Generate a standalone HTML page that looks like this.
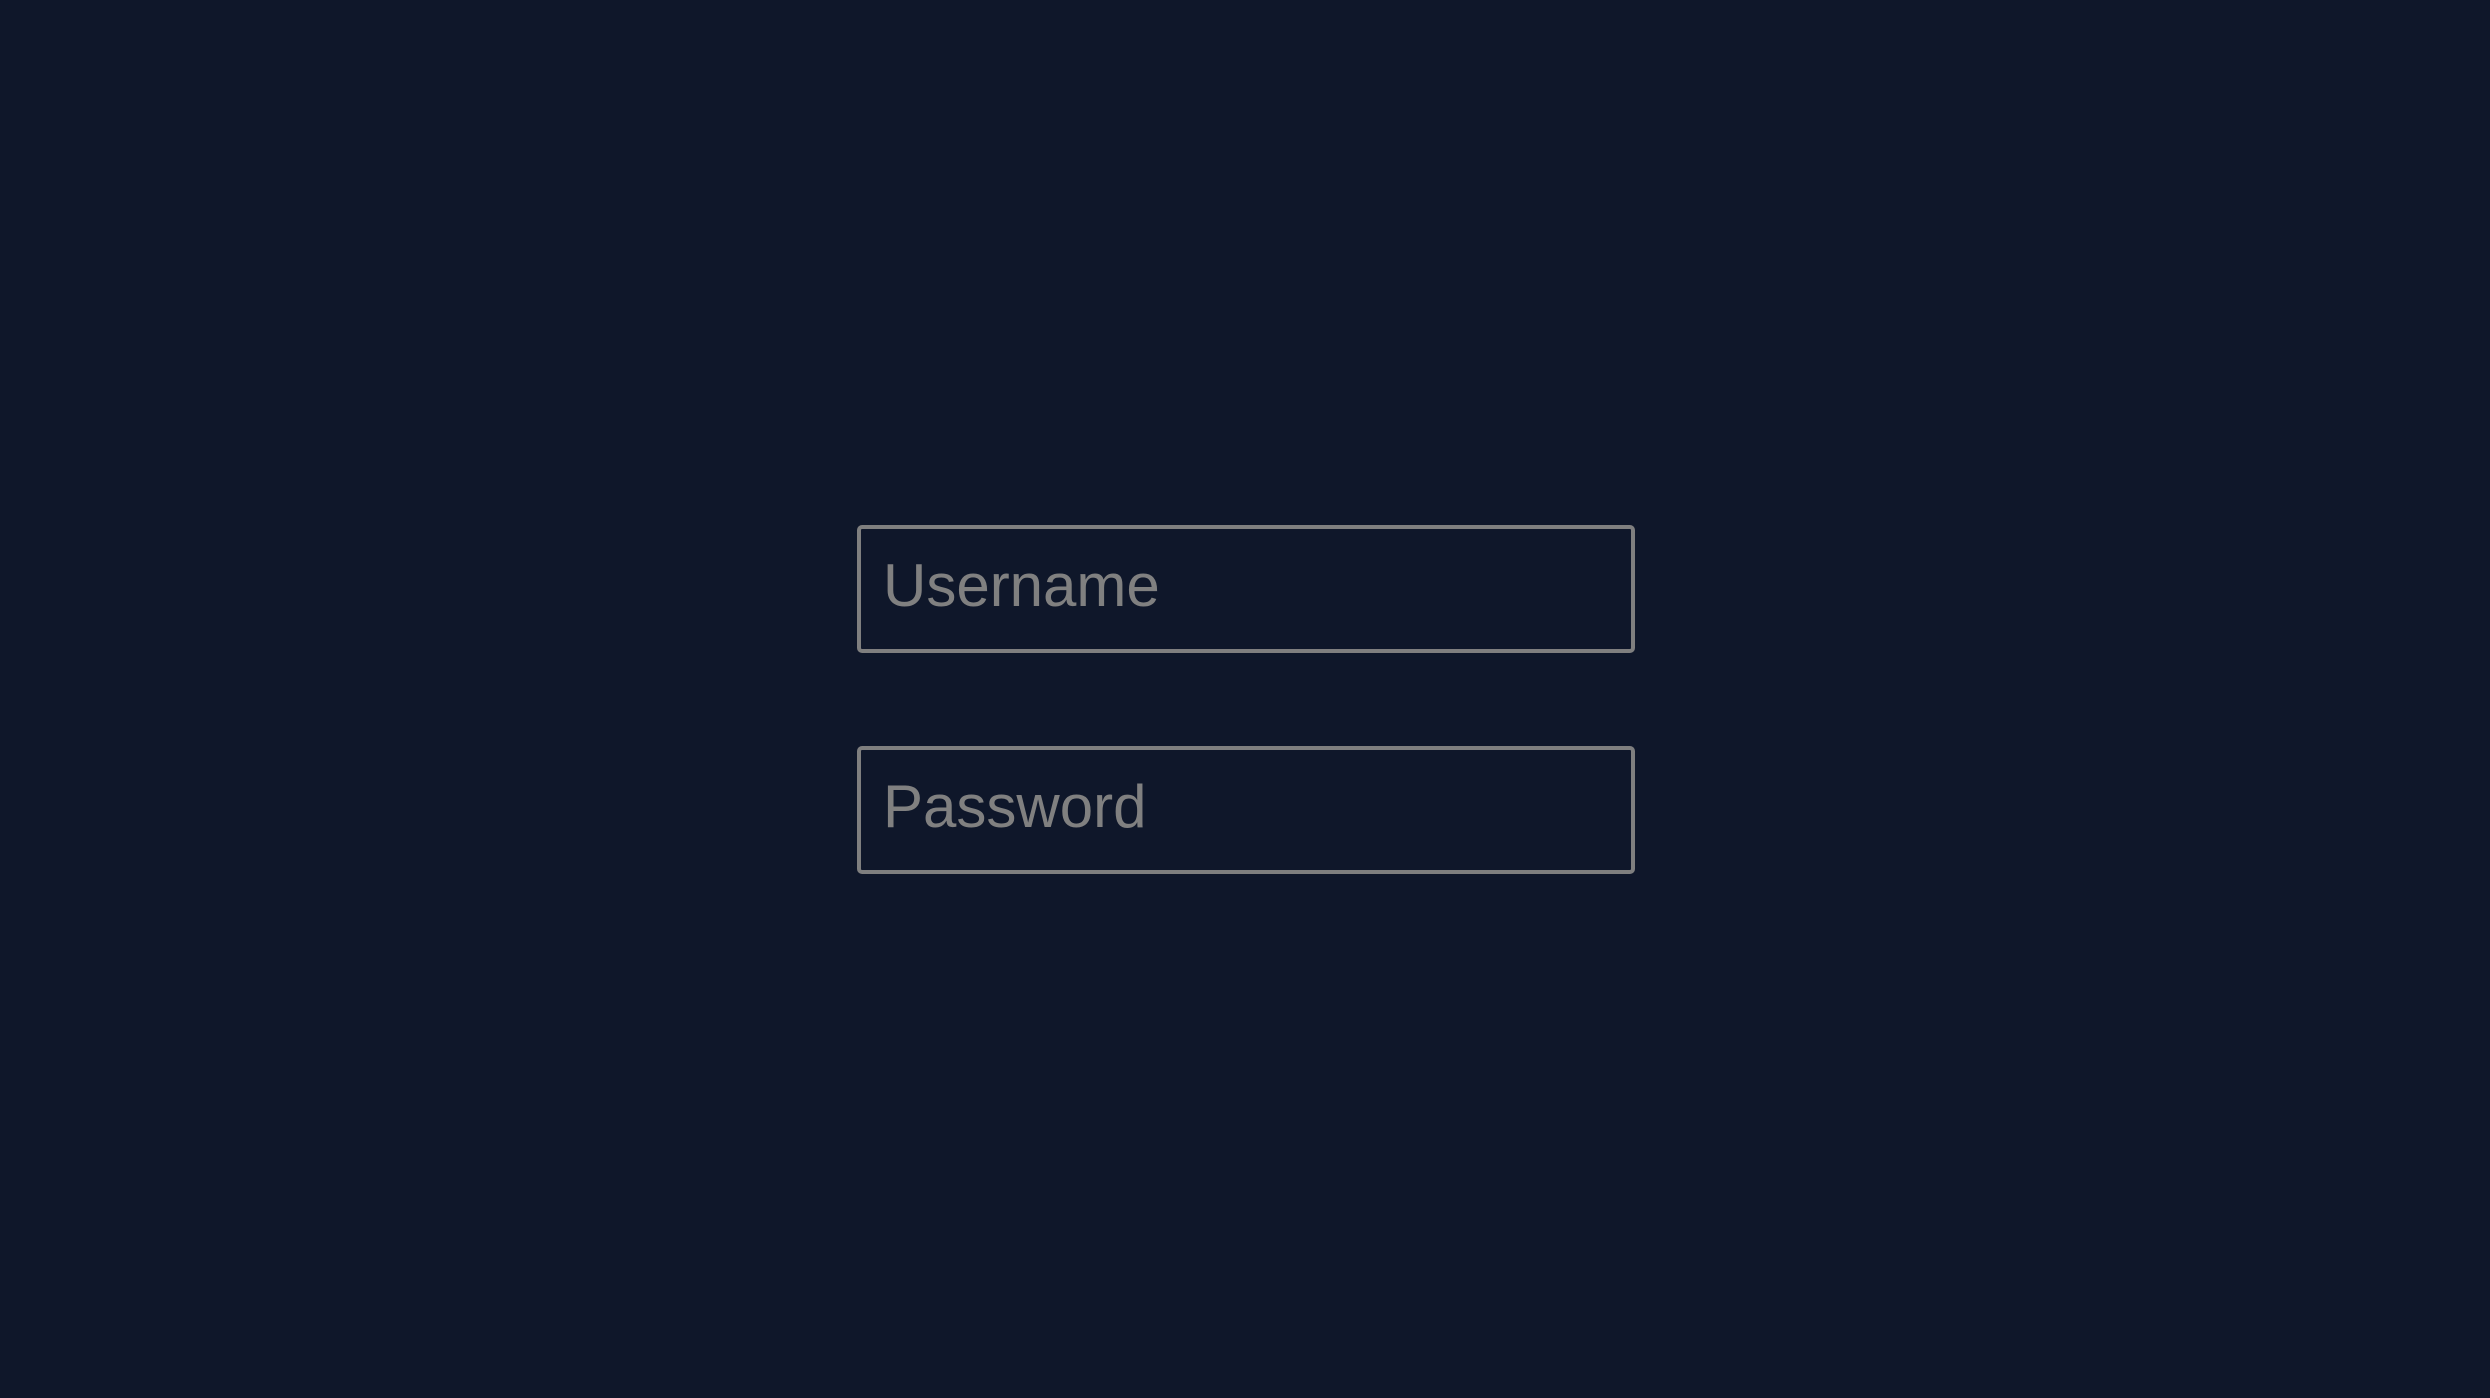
<!DOCTYPE html>
<html><head><style>
html,body{margin:0;padding:0;width:2490px;height:1398px;background:#0f172a;overflow:hidden;}
.box{position:absolute;left:857px;width:778px;height:128px;box-sizing:border-box;border:4px solid #7f7f7f;border-radius:5px;background:#0f172a;}
.t{position:absolute;left:22px;top:-3px;line-height:120px;font-family:"Liberation Sans",sans-serif;font-size:60px;color:#808080;}
</style></head><body>
<div class="box" style="top:525px"><div class="t">Username</div></div>
<div class="box" style="top:746px"><div class="t">Password</div></div>
</body></html>
